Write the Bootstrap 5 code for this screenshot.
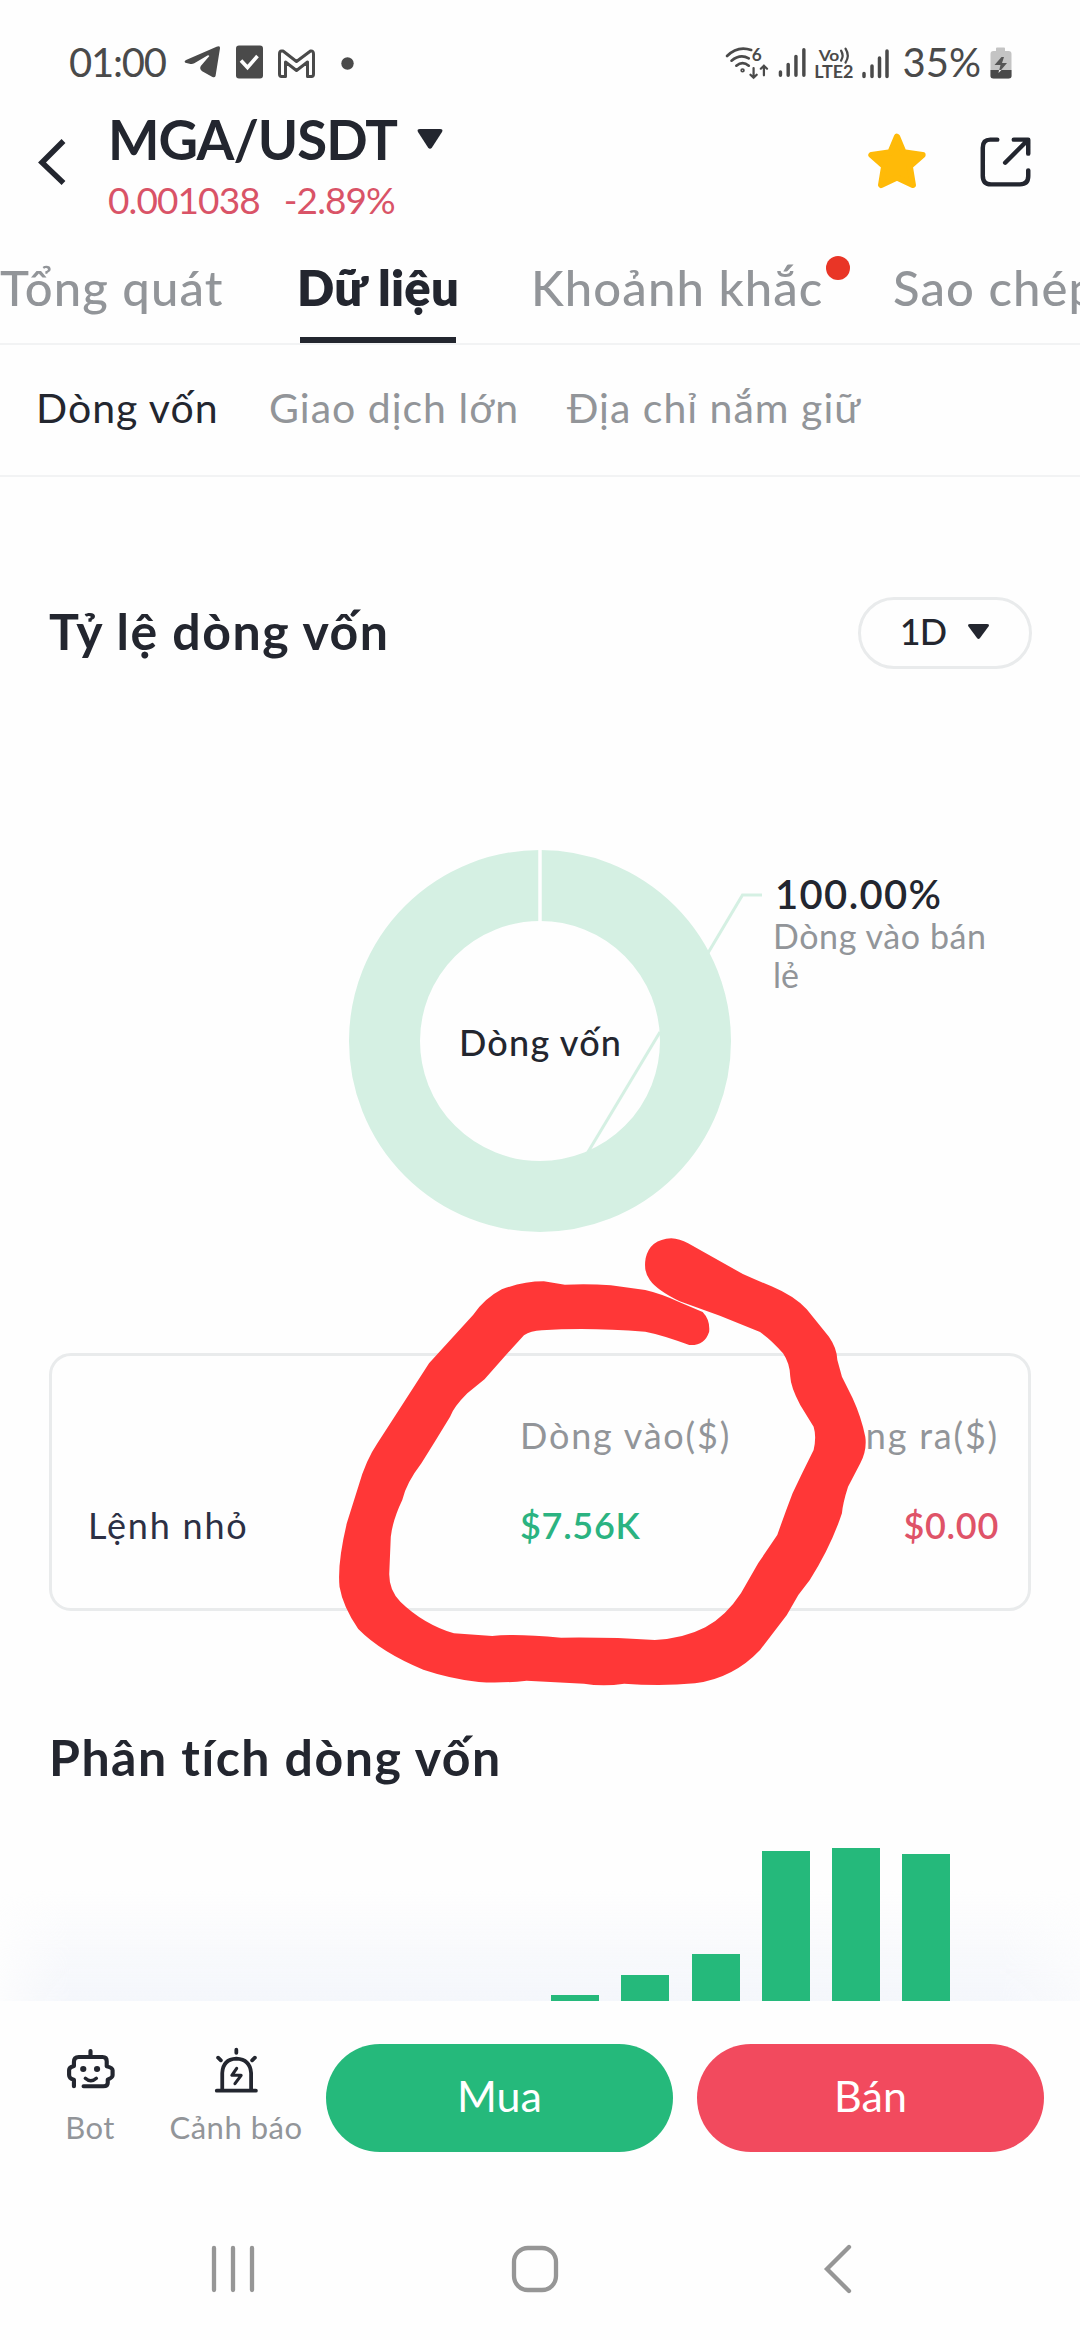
<!DOCTYPE html>
<html lang="vi">
<head>
<meta charset="utf-8">
<meta name="viewport" content="width=device-width, initial-scale=1">
<title>MGA/USDT</title>
<link href="https://cdn.jsdelivr.net/npm/bootstrap@5.3.0/dist/css/bootstrap.min.css" rel="stylesheet">
<style>
:root{--ink:#23262f;--mute:#929599;--up:#25b97b;--down:#f24a5e;--rule:#f2f3f4;--edge:#e9ebec}
body{width:1080px;height:2340px;overflow:hidden;background:#fefefe;color:var(--ink);font-family:Lato,"Noto Sans",sans-serif;font-variant-ligatures:none;position:relative}
svg{display:block;flex:none;overflow:visible}
.ink-mute{color:var(--mute)}
.status{height:96px;padding:27px 68px 0 69px;color:#4a4a4a;font-size:40px;line-height:60px}
.clock{letter-spacing:-1.2px}
.head{height:144px;padding:9px 49px 0 38px}
.pair{font-size:54.5px;line-height:68px;font-weight:700}
.pair span{letter-spacing:-1px}
.quote{font-size:37px;line-height:53px;color:#d95367;letter-spacing:-.9px}
.tabs{height:105px;border-bottom:2px solid var(--rule);flex-wrap:nowrap;overflow:hidden}
.tabs .nav-link{padding:17px 0 0;height:103px;font-size:49px;line-height:60px;color:var(--mute);white-space:nowrap;font-weight:500;letter-spacing:1.1px;flex:none}
.tabs .nav-link.active{width:156px;color:var(--ink);font-weight:800;letter-spacing:.3px;text-indent:-3px;border-bottom:6px solid var(--ink)}
.tab-first{width:300px}
.tab-dot{width:292px;margin-left:75px}
.tab-last{margin-left:70px}
.dot-new{width:24px;height:24px;background:#e93526;top:16px;left:295px}
.subtabs{height:132px;border-bottom:2px solid var(--rule);padding:0 0 4px 36px;font-size:41px;letter-spacing:1px}
.heading{font-size:50px;line-height:60px;font-weight:700;letter-spacing:1.5px}
.pill{width:174px;height:72px;border:3px solid var(--edge);font-size:36px;padding:0 0 4px 0;font-weight:500;letter-spacing:-1px}
.flow-card{height:258px;border:3px solid var(--edge);border-radius:22px;background:transparent;margin:0 49px;padding:34px 29px 0 36px;font-size:36px;line-height:90px;letter-spacing:1.8px}
.flow-card .c-name{width:432px;color:#2c3044}
.flow-card .c-sum{font-weight:600;letter-spacing:.7px}
.bars{height:180px;padding-left:551px;gap:22.3px;z-index:1}
.bars>div{width:48px;background:var(--up)}
.dock{height:189px;background:#fefefe;padding:43px 36px 0 0}
.dock-fade{height:110px;bottom:339px;background:linear-gradient(rgba(240,244,251,0),rgba(240,243,250,.7));-webkit-mask-image:linear-gradient(90deg,rgba(0,0,0,.2),#000 70px,#000 1000px,rgba(0,0,0,.4))}
.dock-item{font-size:31px;line-height:40px;color:var(--mute);letter-spacing:.5px}
.btn-trade{height:108px;width:347px;color:#fff;font-size:43px;padding:0 0 3px;border:0}
.sysnav{height:150px;background:#fefefe}
.scribble{left:320px;top:1220px;z-index:2}
</style>
</head>
<body>
<div class="status d-flex align-items-center">
  <span class="clock">01:00</span>
  <svg style="margin-left:18px" width="36" height="33" viewBox="535 143 105 99" preserveAspectRatio="none" fill="#4a4a4a"><path d="M636 147Q641 147 640 153L627 236Q625 242 618 239L588 222Q579 215 584 206L609 176Q606 172 601 176L565 198Q558 202 551 199L539 196Q534 192 541 188L630 148Z"/></svg>
  <svg class="ms-3" width="27" height="34" viewBox="0 0 27 34"><rect width="27" height="33" y=".5" rx="3" fill="#4a4a4a"/><path d="M5 15.5l6.500 7L21.500 11" stroke="#fefefe" stroke-width="3.600" fill="none"/></svg>
  <svg style="margin-left:15px;margin-top:4px" width="37" height="29" viewBox="0 0 37 29"><path d="M3.500 2Q1.500 2 1.500 5v20q0 2.500 2 2.500h4V13l11 8.500L29.500 13v14.500h4q2 0 2-2.500V5q0-3.500-3-3L18.500 12.500 5 2z" fill="none" stroke="#4a4a4a" stroke-width="3" stroke-linejoin="round"/></svg>
  <svg style="margin-left:26px;margin-top:3px" width="13" height="13" viewBox="0 0 13 13"><circle cx="6.500" cy="6.500" r="6.200" fill="#4a4a4a"/></svg>
  <svg class="ms-auto" style="margin-top:3px" width="129" height="34" viewBox="527 141 374.600 102" preserveAspectRatio="none" fill="none" stroke="#4a4a4a" stroke-width="8" stroke-linecap="round">
    <path d="M533 171Q564 139 603 153M546 185Q571 164 596 178M560 200Q578 185 596 200"/><circle cx="578" cy="214" r="2.500"/>
    <path d="M610 207v29M601 227l9 9 9-9M640 229v-29M631 209l9-9 9 9" stroke-width="6.500"/>
    <path d="M688 219v10M710.500 196v33M733 172v57M756 152v77" stroke-width="10"/>
    <path d="M864 155q9 15 0 30M877 149q13 21 0 42" stroke-width="6.500"/>
    <g fill="#4a4a4a" stroke="none" font-weight="700" font-size="50"><text x="605" y="186" textLength="29" lengthAdjust="spacingAndGlyphs">6</text><text x="799" y="187" font-size="48" textLength="60" lengthAdjust="spacingAndGlyphs">Vo</text><text x="786" y="237" textLength="114" lengthAdjust="spacingAndGlyphs" font-size="52">LTE2</text></g>
  </svg>
  <svg style="margin-left:7px;margin-top:3px" width="28" height="32" viewBox="0 0 28 32" stroke="#4a4a4a" stroke-width="3.500" stroke-linecap="round"><path d="M3 26.500v3M11 19v10.500M18.500 11v18.500M26 4v25.500"/></svg>
  <span style="margin-left:14px">35%</span>
  <svg style="margin-left:9px;margin-top:3px" width="22" height="32" viewBox="0 0 22 32"><path d="M6 4V1.500Q6 .5 7 .5h7q1 0 1 1V4h3.500Q21.500 4 21.500 7v22q0 2.500-3 2.500h-15q-3 0-3-2.500V7q0-3 3-3z" fill="#c4c4c4"/><path d="M.5 23h21v6q0 2.500-3 2.500h-15q-3 0-3-2.500z" fill="#4a4a4a"/><path d="M11.500 10L4.500 18h6l-2 8 8.500-10h-5l2-6z" fill="#555"/><path d="M9 23h2.500l-3 3z" fill="#eee"/></svg>
</div>

<header class="head d-flex">
  <svg style="margin-top:33px" width="28" height="48" viewBox="0 0 28 48"><path d="M25.500 3L4 24.500 25.500 45" fill="none" stroke="#23262f" stroke-width="5.500"/></svg>
  <div style="margin-left:42px">
    <div class="pair d-flex align-items-center"><span>MGA/USDT</span>
      <svg style="margin-left:20px" width="26" height="22" viewBox="0 0 26 22"><path d="M3 1h20q3.500 0 2 3L15 19.500q-2 2.500-4 0L1 4Q-.5 1 3 1z" fill="#23262f"/></svg></div>
    <div class="quote d-flex"><span>0.001038</span><span style="margin-left:24px">-2.89%</span></div>
  </div>
  <div class="ms-auto d-flex" style="padding-top:27px;gap:52px">
    <svg width="59" height="60" viewBox="944 397 171 180" preserveAspectRatio="none"><path d="M1028 411l19 47 55 8-37 34 9 56-46-22-46 22 9-56-37-34 55-8z" fill="#ffba08" stroke="#ffba08" stroke-width="18" stroke-linejoin="round"/></svg>
    <svg style="margin-top:4px" width="52" height="54" viewBox="1265 409 151 162" preserveAspectRatio="none" fill="none" stroke="#23262f" stroke-width="13" stroke-linecap="round" stroke-linejoin="round"><path d="M1318 420h-20q-22 0-22 24v84q0 26 24 26h84q24 0 24-25v-17M1366 420h42v42M1341 489l66-68"/></svg>
  </div>
</header>

<nav class="nav tabs">
  <a class="nav-link tab-first">Tổng quát</a>
  <a class="nav-link active">Dữ liệu</a>
  <a class="nav-link tab-dot position-relative">Khoảnh khắc<span class="dot-new rounded-circle position-absolute"></span></a>
  <a class="nav-link tab-last">Sao chép</a>
</nav>
<nav class="subtabs d-flex align-items-center ink-mute">
  <span style="color:var(--ink);width:233px">Dòng vốn</span>
  <span style="width:298px">Giao dịch lớn</span>
  <span>Địa chỉ nắm giữ</span>
</nav>

<section>
  <div class="d-flex align-items-center justify-content-between" style="padding:120px 48px 0 49px">
    <h2 class="heading mb-1">Tỷ lệ dòng vốn</h2>
    <div class="pill rounded-pill d-flex align-items-center justify-content-center"><span>1D</span>
      <svg style="margin-left:21px" width="23" height="17" viewBox="0 0 23 17"><path d="M3 1h17q3 0 1.500 2.500L13 15q-1.500 2-3 0L1.500 3.500Q0 1 3 1z" fill="#23262f"/></svg></div>
  </div>
  <svg width="1080" height="684" viewBox="0 669 1080 684">
    <circle cx="540" cy="1041" r="155.500" fill="none" stroke="#d5f0e3" stroke-width="71"/>
    <path d="M540 849v73" stroke="#fefefe" stroke-width="3.500"/>
    <path d="M708 953L742.500 895H762M660 1032L588 1152" fill="none" stroke="#d5f0e3" stroke-width="3"/>
    <g fill="#23262f" font-weight="500"><text x="459" y="1056" font-size="36" textLength="162">Dòng vốn</text>
    <text x="775" y="909" font-size="40" font-weight="600" textLength="166">100.00%</text></g>
    <g fill="#929599" font-size="34"><text x="773" y="949" textLength="213">Dòng vào bán</text><text x="773" y="988">lẻ</text></g>
  </svg>
  <div class="card flow-card">
    <div class="d-flex ink-mute"><span class="c-name"></span><span>Dòng vào($)</span><span class="ms-auto">Dòng ra($)</span></div>
    <div class="d-flex"><span class="c-name">Lệnh nhỏ</span><span class="c-sum" style="color:#2bb381">$7.56K</span><span class="c-sum ms-auto" style="color:#df5368">$0.00</span></div>
  </div>
  <h2 class="heading mb-0" style="padding:116px 0 0 49px">Phân tích dòng vốn</h2>
  <div class="bars d-flex align-items-end position-relative" style="margin-top:34px">
    <div style="height:6px"></div><div style="height:26px"></div><div style="height:47.500px"></div><div style="height:150px"></div><div style="height:153px"></div><div style="height:147px"></div>
  </div>
</section>

<div class="dock-fade position-absolute start-0 end-0"></div>
<footer class="position-absolute bottom-0 start-0 end-0">
  <div class="dock d-flex">
    <div class="dock-item d-flex flex-column align-items-center" style="width:180px;padding-top:4px">
      <svg width="49" height="46" viewBox="190 208 142 138" preserveAspectRatio="none" fill="none" stroke="#23262f" stroke-width="12" stroke-linecap="round" stroke-linejoin="round"><path d="M261 217v17M213 323v-20q-14-3-14-14v-15q0-8 14-12v-12q0-15 14-15h69q12 0 12 13v15q17 4 17 12v15q0 7-14 13v9q0 11-13 11h-57"/><path d="M246 299q16 15 32 0" stroke-width="10"/><g fill="#23262f" stroke="none"><circle cx="240" cy="271" r="9"/><circle cx="280" cy="271" r="9"/></g></svg>
      <span style="margin-top:13px">Bot</span></div>
    <div class="dock-item d-flex flex-column align-items-center" style="width:112px;padding-top:3px">
      <svg width="45" height="48" viewBox="617 204 131 144" preserveAspectRatio="none" fill="none" stroke="#23262f" stroke-width="11" stroke-linecap="round" stroke-linejoin="round"><path d="M625 335h114M641 332v-50q2-41 41-43 40 2 43 43v50M682 212v10M629 236l8 8M736 236l-8 8"/><path d="M683 268l-14 21h27l-18 25" stroke-width="9"/></svg>
      <span class="text-nowrap" style="margin-top:12px">Cảnh báo</span></div>
    <button class="btn btn-trade rounded-pill ms-auto" style="background:var(--up)">Mua</button>
    <button class="btn btn-trade rounded-pill" style="background:var(--down);margin-left:24px">Bán</button>
  </div>
  <div class="sysnav">
    <svg width="1080" height="150" viewBox="0 2190 1080 150" fill="none" stroke="#969696" stroke-width="4.300" stroke-linecap="round"><path d="M214 2248v42M233 2248v42M252 2248v42M849 2247l-22 22 22 22"/><rect x="514" y="2248" width="42" height="42" rx="14"/></svg>
  </div>
</footer>
<svg class="scribble position-absolute" width="600" height="500" viewBox="0 0 1568 1500" preserveAspectRatio="none" fill="#ff3737"><path d="M918 55Q940 56 962 70L1105 162Q1140 180 1180 199Q1240 228 1272 268L1330 350Q1351 384 1352 420L1364 470L1392 535Q1414 590 1425 650Q1430 690 1412 730L1380 800Q1366 850 1364 880Q1335 980 1280 1080L1250 1125L1220 1185L1150 1290Q1080 1375 980 1390Q890 1400 795 1391Q740 1400 690 1391L540 1382Q470 1391 415 1386Q340 1376 270 1349Q160 1297 100 1227Q60 1160 51 1100Q45 1030 70 910L100 800Q120 720 150 670L210 563L285 430L400 285Q430 235 475 208Q530 184 585 184L640 194Q700 190 760 196L850 210Q895 222 940 247L1000 276Q1020 300 1017 335Q1005 378 965 375Q895 345 850 335Q700 322 580 331Q550 333 533 346L490 400L430 478L385 520Q350 560 340 590L300 665L265 730Q225 790 215 840Q190 900 185 950L181 1060Q180 1110 210 1145Q270 1212 350 1240L450 1248Q510 1240 630 1253Q760 1251 875 1260Q950 1256 1007 1222Q1060 1190 1100 1120L1145 1030L1195 945Q1215 880 1235 820L1260 760L1290 690Q1298 650 1290 620L1255 555Q1230 500 1229 470Q1228 430 1210 400Q1180 360 1150 336L1045 287L940 244Q880 210 862 180Q845 155 851 115Q862 58 918 55Z"/></svg>
<script src="https://cdn.jsdelivr.net/npm/bootstrap@5.3.0/dist/js/bootstrap.bundle.min.js"></script>
</body>
</html>
